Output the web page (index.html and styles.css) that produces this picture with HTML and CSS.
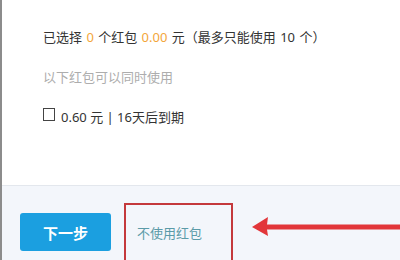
FILE: index.html
```html
<!DOCTYPE html>
<html lang="zh-CN">
<head>
<meta charset="utf-8">
<link rel="stylesheet" href="styles.css">
</head>
<body>
<div class="page">
  <main class="content">
    <p class="summary">已选择 <span class="hl">0</span> 个红包 <span class="hl">0.00</span> 元（最多只能使用 10 个）</p>
    <p class="hint">以下红包可以同时使用</p>
    <label class="item"><span class="check"></span><span>0.60 元 | 16天后到期</span></label>
  </main>
  <footer class="footer">
    <button class="next">下一步</button>
    <a class="skip">不使用红包</a>
    <svg class="arrow" width="150" height="24" viewBox="0 0 150 24">
      <polygon points="0,11 16,1 15,8.5 150,8.5 150,13.5 15,13.5 16,20" fill="#e2363a"/>
    </svg>
  </footer>
</div>
</body>
</html>
```
FILE: styles.css
```css
html, body {
  margin: 0;
  padding: 0;
  background: #fff;
}
.page {
  width: 400px;
  height: 260px;
  box-sizing: border-box;
  border-left: 2px solid #8c8c8c;
  display: flex;
  flex-direction: column;
  overflow: hidden;
  font-family: "Noto Sans", "Noto Sans CJK SC", sans-serif;
  position: relative;
}
.content {
  height: 185px;
  flex-shrink: 0;
  box-sizing: border-box;
  padding: 27px 0 0 41px;
  display: flex;
  flex-direction: column;
  gap: 20px;
}
.content p, .item {
  margin: 0;
  font-size: 13px;
  line-height: 20px;
  height: 20px;
}
.summary {
  color: #333;
  word-spacing: 1px;
}
.hl {
  color: #f3a63a;
}
.hint {
  color: #adadad;
}
.item {
  display: flex;
  align-items: center;
  color: #333;
  gap: 6px;
}
.check {
  width: 10px;
  height: 11px;
  border: 1.5px solid #444;
  align-self: flex-start;
  margin-top: 1px;
}
.footer {
  flex: 1;
  min-height: 0;
  background: #f3f6fb;
  border-top: 1px solid #e3e7ed;
  display: flex;
  align-items: flex-start;
  padding: 27px 0 0 18px;
  position: relative;
}
.next {
  width: 91px;
  height: 38px;
  flex-shrink: 0;
  border: none;
  border-radius: 3px;
  background: #1b9fe0;
  color: #fff;
  font-family: "Noto Sans CJK SC", sans-serif;
  font-size: 15px;
  font-weight: bold;
  margin-right: 13px;
  padding: 0;
}
.skip {
  margin-top: -10px;
  width: 109px;
  height: 66px;
  flex-shrink: 0;
  box-sizing: border-box;
  border: 2px solid #c4393c;
  padding: 18px 0 0 11px;
  font-size: 13px;
  line-height: 20px;
  color: #5b9ba8;
}
.arrow {
  position: absolute;
  left: 250px;
  top: 30px;
}
```
